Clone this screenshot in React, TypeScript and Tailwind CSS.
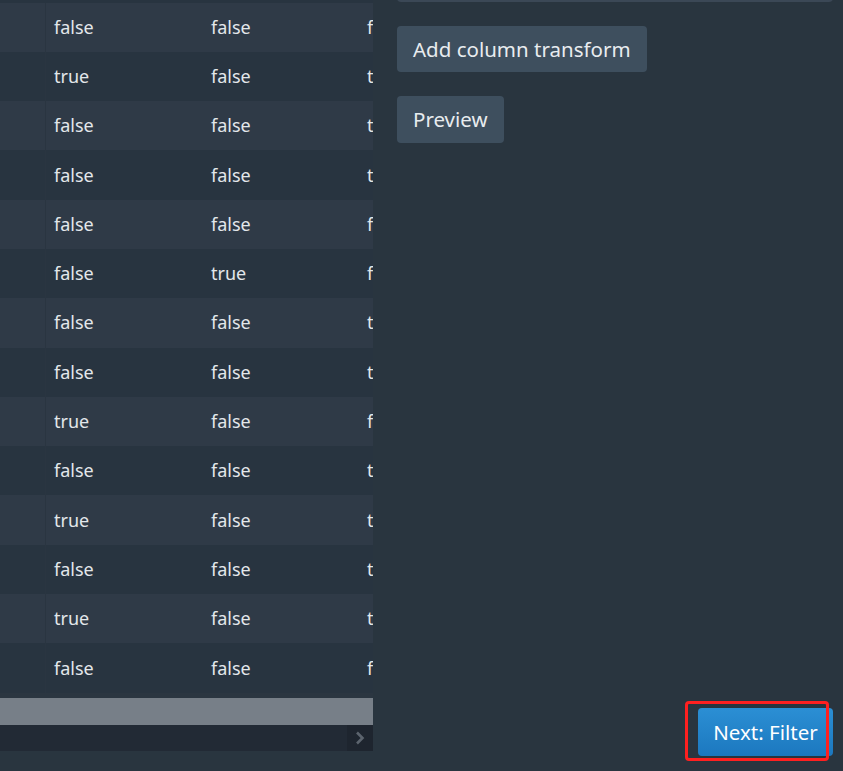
import React from "react";

const rows: string[][] = [
  ["false", "false", "f"],
  ["true", "false", "t"],
  ["false", "false", "t"],
  ["false", "false", "t"],
  ["false", "false", "f"],
  ["false", "true", "f"],
  ["false", "false", "t"],
  ["false", "false", "t"],
  ["true", "false", "f"],
  ["false", "false", "t"],
  ["true", "false", "t"],
  ["false", "false", "t"],
  ["true", "false", "t"],
  ["false", "false", "f"],
];

const App = () => {
  return (
    <div
      className="flex h-[771px] w-[843px] overflow-hidden bg-[#29353f] text-[#e3e7eb]"
      style={{ fontFamily: '"Noto Sans", "Open Sans", sans-serif' }}
    >
      <section className="flex w-[373px] shrink-0 flex-col overflow-hidden bg-[#283440]">
        <div className="h-[2.5px] bg-[#283440]" />
        {rows.map((row, i) => (
          <div
            key={i}
            className={
              "flex h-[49.3px] shrink-0 items-center text-[18px] " +
              (i % 2 === 0 ? "bg-[#2f3a47]" : "bg-[#283440]")
            }
          >
            <div className="h-full w-[46px] shrink-0 border-r border-[#2a3541]" />
            <div className="w-[157px] shrink-0 pl-2">{row[0]}</div>
            <div className="w-[156px] shrink-0 pl-2">{row[1]}</div>
            <div className="shrink-0 pl-2">{row[2]}</div>
          </div>
        ))}
        <div className="h-[5.5px] bg-[#2b3641]" />
        <div className="h-[27px] bg-[#777f88]" />
        <div className="flex h-[26px] justify-end bg-[#222a35]">
          <div className="flex w-[26px] items-center justify-center bg-[#1e252f]">
            <svg width="10" height="14" viewBox="0 0 10 14">
              <path d="M2 1.5 L7.5 7 L2 12.5" fill="none" stroke="#5c646e" strokeWidth="2.6" />
            </svg>
          </div>
        </div>
        <div className="flex-1 bg-[#29353f]" />
      </section>

      <section className="relative flex flex-1 flex-col pl-[24px] pr-[10px] pb-[15px]">
        <div className="-mt-[38px] h-[40px] rounded bg-[#3b4856]" />
        <div className="mt-6 flex flex-col items-start gap-6">
          <button className="h-[46px] rounded bg-[#3e4f5e] px-4 text-[20.5px] text-[#e8ecef]">
            Add column transform
          </button>
          <button className="h-[47px] rounded bg-[#3e4f5e] px-4 text-[20.5px] text-[#e8ecef]">
            Preview
          </button>
        </div>
        <div className="mt-auto flex justify-end">
          <button className="h-[48px] w-[135px] rounded bg-gradient-to-b from-[#2b8fd4] to-[#1c78bf] text-[20.5px] text-white">
            Next: Filter
          </button>
        </div>
        <div className="pointer-events-none absolute left-[312px] top-[701px] h-[60px] w-[144px] rounded-sm border-[3px] border-[#ff2020]" />
      </section>
    </div>
  );
};

export default App;
